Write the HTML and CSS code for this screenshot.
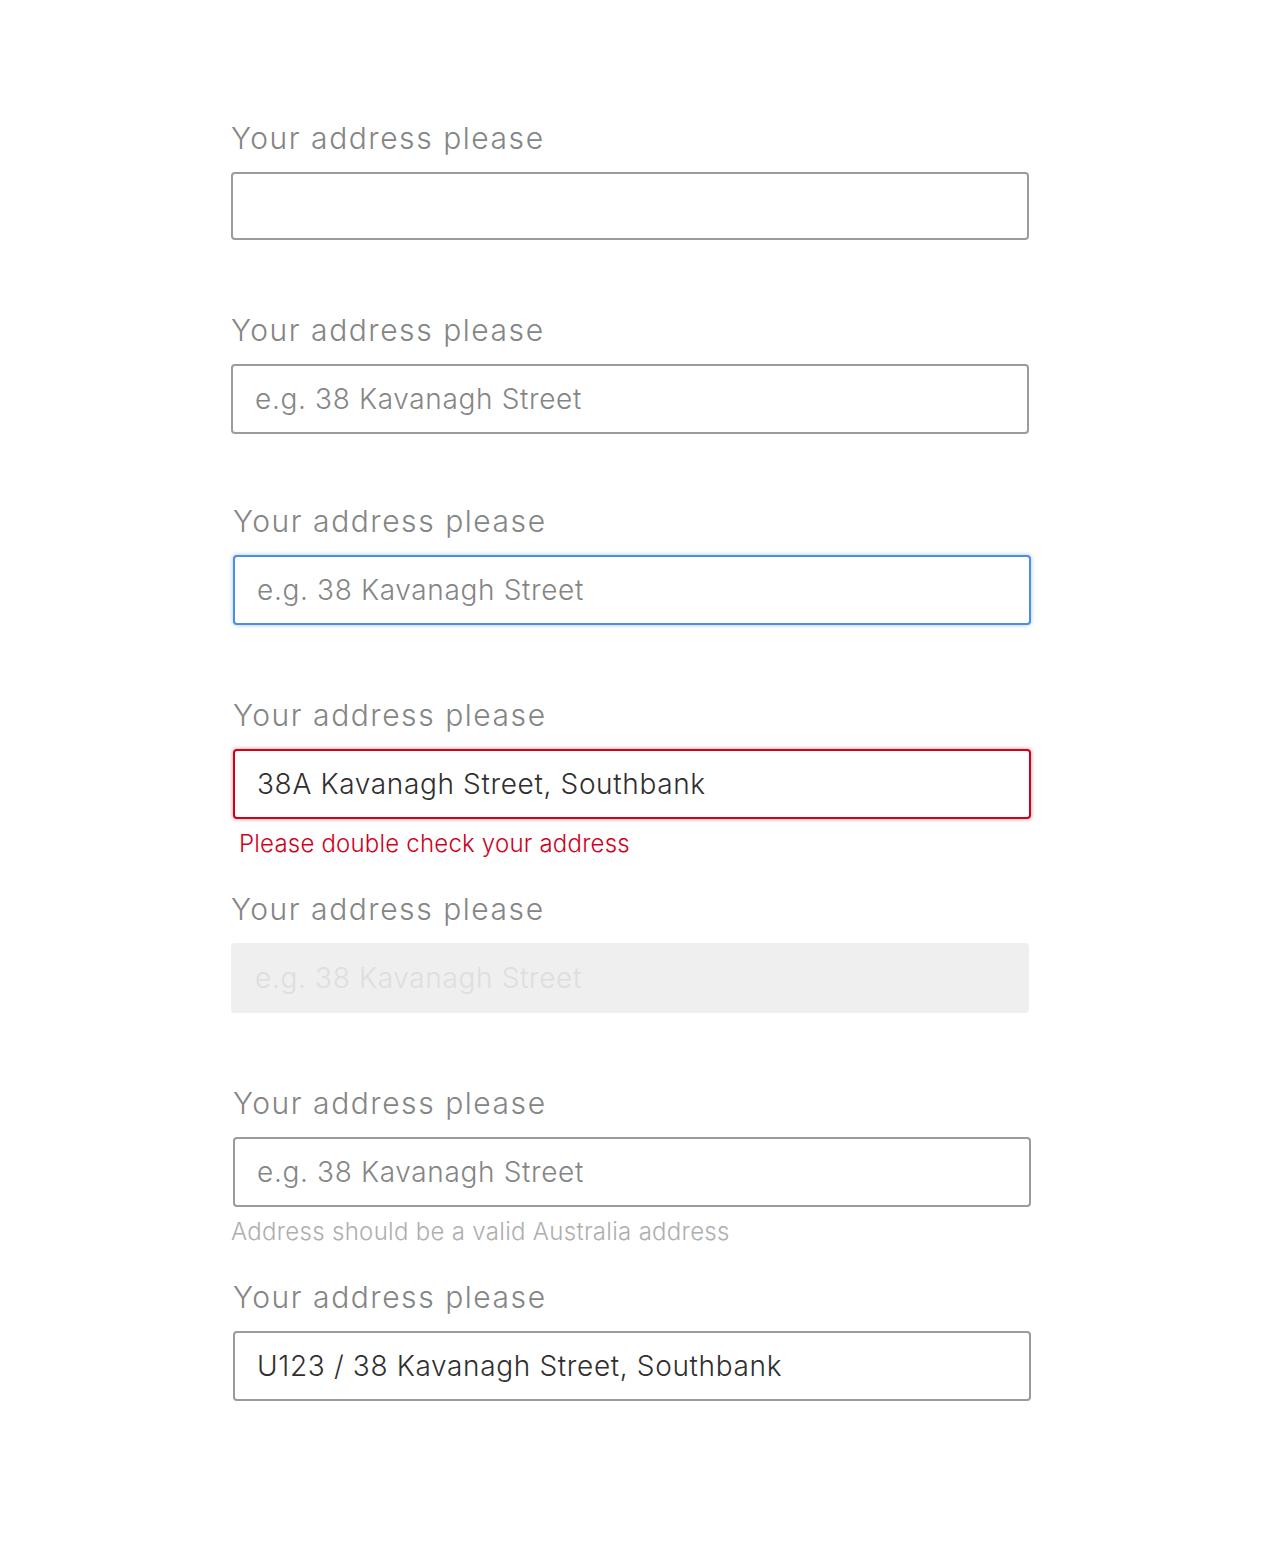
FILE: index.html
```html
<!DOCTYPE html>
<html lang="en">
<head>
<meta charset="utf-8">
<title>Address fields</title>
<link rel="stylesheet" href="styles.css">
</head>
<body>
<main class="form">
  <div class="field field-first">
    <label class="label" for="a1">Your address please</label>
    <input class="input" id="a1" type="text">
    <div class="msg"></div>
  </div>
  <div class="field field-second">
    <label class="label" for="a2">Your address please</label>
    <input class="input" id="a2" type="text" placeholder="e.g. 38 Kavanagh Street">
    <div class="msg"></div>
  </div>
  <div class="field shift">
    <label class="label" for="a3">Your address please</label>
    <input class="input focus" id="a3" type="text" placeholder="e.g. 38 Kavanagh Street">
    <div class="msg"></div>
  </div>
  <div class="field shift">
    <label class="label" for="a4">Your address please</label>
    <input class="input error" id="a4" type="text" value="38A Kavanagh Street, Southbank">
    <div class="msg msg-error">Please double check your address</div>
  </div>
  <div class="field">
    <label class="label" for="a5">Your address please</label>
    <input class="input" id="a5" type="text" placeholder="e.g. 38 Kavanagh Street" disabled>
    <div class="msg"></div>
  </div>
  <div class="field shift">
    <label class="label" for="a6">Your address please</label>
    <input class="input" id="a6" type="text" placeholder="e.g. 38 Kavanagh Street">
    <div class="msg msg-hint">Address should be a valid Australia address</div>
  </div>
  <div class="field shift">
    <label class="label" for="a7">Your address please</label>
    <input class="input" id="a7" type="text" value="U123 / 38 Kavanagh Street, Southbank">
    <div class="msg"></div>
  </div>
</main>
</body>
</html>
```
FILE: styles.css
```css
html, body {
  margin: 0;
  padding: 0;
  background: #ffffff;
}
body {
  font-family: "Inter", "Open Sans", sans-serif;
}
.form {
  display: flex;
  flex-direction: column;
  width: 798px;
  padding: 118px 0 0 231px;
}
.field {
  display: flex;
  flex-direction: column;
}
.field.shift {
  margin-left: 2px;
}
.label {
  font-size: 30px;
  font-weight: 300;
  line-height: 36px;
  letter-spacing: 1.55px;
  color: #858585;
  padding-top: 2px;
  margin-bottom: 16px;
}
.input {
  box-sizing: border-box;
  width: 798px;
  height: 70px;
  margin: 0;
  padding: 0 22px;
  border: 2px solid #9b9b9b;
  border-radius: 4px;
  background: #ffffff;
  font-family: inherit;
  font-size: 28px;
  font-weight: 300;
  letter-spacing: 0.65px;
  color: #2f2f2f;
  outline: none;
}
.field-first .input {
  height: 68px;
}
.input::placeholder {
  color: #858585;
  opacity: 1;
}
.input.focus {
  border-color: #4a90e2;
  box-shadow: 0 0 4px rgba(74, 144, 226, 0.5);
}
.input.error {
  border-color: #d0021b;
  box-shadow: 0 0 4px rgba(208, 2, 27, 0.45);
}
.input:disabled {
  background: #efefef;
  border-color: #efefef;
}
.input:disabled::placeholder {
  color: #dedede;
}
.msg {
  height: 70px;
  font-size: 24px;
  font-weight: 300;
  line-height: 30px;
  padding-top: 10px;
  box-sizing: border-box;
}
.field-second .msg {
  height: 67px;
}
.msg-error {
  color: #d0021b;
  padding-left: 6px;
  letter-spacing: 0.2px;
}
.msg-hint {
  color: #aeaeae;
  margin-left: -2px;
  letter-spacing: 0.3px;
}
```
